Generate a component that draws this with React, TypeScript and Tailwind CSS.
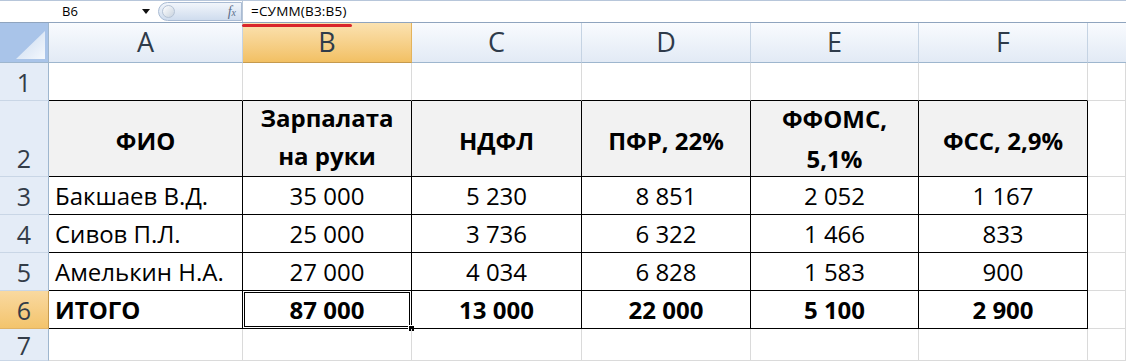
const grid = "grid grid-cols-[49px_194px_169px_170px_169px_168px_169px_1fr]";
const cellFont = "font-['Open_Sans','Noto_Sans',sans-serif]";

type Row = {
  n: number;
  h: string;
  kind: "empty" | "head" | "data" | "total";
  cells?: string[];
};

const rows: Row[] = [
  { n: 1, h: "grid-rows-[38px]", kind: "empty" },
  { n: 2, h: "grid-rows-[76px]", kind: "head", cells: ["ФИО", "Зарпалата на руки", "НДФЛ", "ПФР, 22%", "ФФОМС, 5,1%", "ФСС, 2,9%"] },
  { n: 3, h: "grid-rows-[38px]", kind: "data", cells: ["Бакшаев В.Д.", "35 000", "5 230", "8 851", "2 052", "1 167"] },
  { n: 4, h: "grid-rows-[38px]", kind: "data", cells: ["Сивов П.Л.", "25 000", "3 736", "6 322", "1 466", "833"] },
  { n: 5, h: "grid-rows-[38px]", kind: "data", cells: ["Амелькин Н.А.", "27 000", "4 034", "6 828", "1 583", "900"] },
  { n: 6, h: "grid-rows-[38px]", kind: "total", cells: ["ИТОГО", "87 000", "13 000", "22 000", "5 100", "2 900"] },
  { n: 7, h: "grid-rows-[32px]", kind: "empty" },
];

function FormulaBar() {
  return (
    <div className="relative flex h-[23px] items-center border-t border-b border-t-[#b7c6da] border-b-[#8fa4be] bg-white font-['Open_Sans',sans-serif] text-[13px] text-black">
      {/* name box */}
      <div className="flex h-full w-[158px] items-center">
        <span className="flex-1 pl-[62px]">B6</span>
        <svg width="8" height="5" viewBox="0 0 8 5" className="mr-[8px]">
          <path d="M0 0h8L4 5z" fill="#111" />
        </svg>
      </div>
      {/* rounded pill with fx */}
      <div className="flex h-[19px] w-[84px] items-center rounded-l-full border border-[#a9bbd3] bg-gradient-to-b from-[#f2f6fb] to-[#cfdcee]">
        <div className="ml-[3px] h-[13px] w-[13px] rounded-full border border-[#b5c3d5] bg-gradient-to-br from-white to-[#c9d3df]" />
        <span className="ml-auto mr-[5px] font-['Liberation_Serif',serif] text-[14px] italic text-[#5b6f8a]">
          f<span className="text-[10px]">x</span>
        </span>
      </div>
      <div className="h-full w-px bg-[#b9c7d8]" />
      <span className="pl-[8px] text-[13.5px] tracking-[0.2px]">=СУММ(B3:B5)</span>
      {/* red underline annotation */}
      <div className="absolute left-[242px] top-[23px] h-[3px] w-[110px] rounded-full bg-[#d9262b]" />
    </div>
  );
}

function Corner() {
  return (
    <div className="relative border-r border-b border-r-[#9eb6ce] border-b-[#9eb6ce] bg-[#a9c4e9]">
      <svg className="absolute inset-0" width="48" height="39" viewBox="0 0 48 39">
        <defs>
          <linearGradient id="tri" x1="0" y1="0" x2="1" y2="1">
            <stop offset="0%" stopColor="#c7d8ef" />
            <stop offset="100%" stopColor="#f4f8fd" />
          </linearGradient>
        </defs>
        <path d="M16 36 L45 8 L45 36 Z" fill="url(#tri)" />
      </svg>
    </div>
  );
}

function ColHeader({ label, selected, last }: { label: string; selected?: boolean; last?: boolean }) {
  return (
    <div
      className={
        "flex items-center justify-center border-b text-[27px] text-[#2f3b4a] " +
        cellFont +
        (last ? " " : " border-r ") +
        (selected
          ? "border-b-[#c59a4e] border-r-[#e3b35c] bg-gradient-to-b from-[#fbe2b0] to-[#f2c063]"
          : "border-b-[#9eb6ce] border-r-[#c5d3e3] bg-gradient-to-b from-[#f9fbfe] to-[#e2eaf5]")
      }
    >
      {label}
    </div>
  );
}

function RowHeader({ n }: { n: number }) {
  const sel = n === 6;
  return (
    <div
      className={
        "flex justify-center overflow-hidden border-r border-b text-[25px] leading-[30px] text-[#333c48] " +
        cellFont +
        (n === 2 ? " items-end pb-[3px]" : " items-center") +
        (sel
          ? " border-r-[#c59a4e] border-b-[#e0b366] bg-gradient-to-b from-[#f9d9a0] to-[#f3c46c]"
          : " border-r-[#9eb6ce] border-b-[#c9d6e6] bg-[#e4ecf7]")
      }
    >
      {n}
    </div>
  );
}

function Cell({ row, c }: { row: Row; c: number }) {
  const inTable = c <= 5;
  const bottomBlack = inTable && row.n >= 1 && row.n <= 6;
  const rightBlack = inTable && row.n >= 2 && row.n <= 6;
  const text = row.cells ? row.cells[c] ?? "" : "";
  const selected = row.n === 6 && c === 1;

  let cls = "relative flex min-h-0 items-center border-r border-b text-black " + cellFont;
  cls += bottomBlack ? " border-b-black" : " border-b-[#dadada]";
  cls += rightBlack ? " border-r-black" : " border-r-[#dadada]";
  if (row.kind === "head" && inTable) cls += " bg-[#f2f2f2]";
  if (c === 0 && row.kind !== "head") cls += " justify-start pl-[6px]";
  else cls += " justify-center text-center";
  if (row.kind === "head" || row.kind === "total") cls += " font-bold";
  cls += row.kind === "head" ? " pt-[3px] text-[24px] leading-[37px]" : " text-[24px] leading-[34px]";

  return (
    <div className={cls}>
      {row.kind === "head" && c === 1 ? (
        <span className="-mt-[6px] leading-[38px]">
          Зарпалата
          <br />
          на руки
        </span>
      ) : row.kind === "head" && c === 4 ? (
        <span className="-mt-[2px] leading-[40px]">
          ФФОМС,
          <br />
          5,1%
        </span>
      ) : (
        <span>{text}</span>
      )}
      {selected && (
        <>
          <div className="pointer-events-none absolute -left-px -top-px -right-px -bottom-px border-[3px] border-double border-black" />
          <div className="absolute -bottom-[4px] -right-[4px] h-[7px] w-[7px] border border-white bg-black" />
        </>
      )}
    </div>
  );
}

export default function App() {
  const letters = ["A", "B", "C", "D", "E", "F", ""];
  return (
    <div className="h-[361px] w-[1126px] overflow-hidden bg-white">
      <FormulaBar />
      <div className={grid + " grid-rows-[40px]"}>
        <Corner />
        {letters.map((l, i) => (
          <ColHeader key={i} label={l} selected={l === "B"} last={i === letters.length - 1} />
        ))}
      </div>
      {rows.map((row) => (
        <div key={row.n} className={grid + " " + row.h}>
          <RowHeader n={row.n} />
          {[0, 1, 2, 3, 4, 5, 6].map((c) => (
            <Cell key={c} row={row} c={c} />
          ))}
        </div>
      ))}
    </div>
  );
}
